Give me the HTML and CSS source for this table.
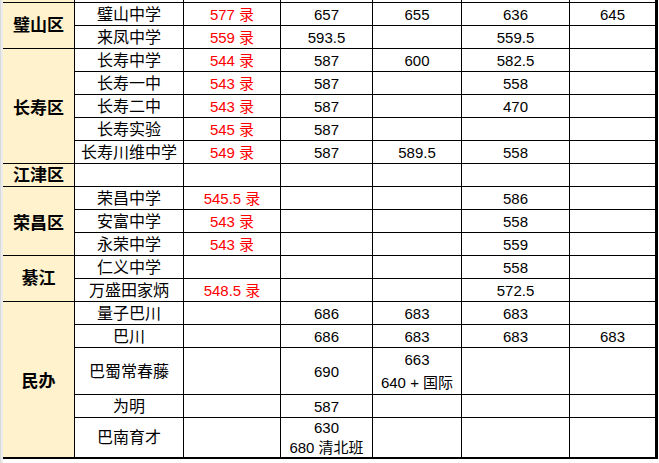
FILE: index.html
```html
<!DOCTYPE html>
<html lang="zh-CN">
<head>
<meta charset="utf-8">
<title>分数线</title>
<link rel="stylesheet" href="styles.css">
</head>
<body>
<div class="sheet">
  <div class="grid">
    <!-- partial top row -->
    <div class="c region"></div><div class="c"></div><div class="c"></div><div class="c"></div><div class="c"></div><div class="c"></div><div class="c"></div>

    <div class="c region span2">璧山区</div>
    <div class="c name">璧山中学</div><div class="c red">577 录</div><div class="c">657</div><div class="c">655</div><div class="c">636</div><div class="c">645</div>
    <div class="c name">来凤中学</div><div class="c red">559 录</div><div class="c">593.5</div><div class="c"></div><div class="c">559.5</div><div class="c"></div>

    <div class="c region span5 low">长寿区</div>
    <div class="c name">长寿中学</div><div class="c red">544 录</div><div class="c">587</div><div class="c">600</div><div class="c">582.5</div><div class="c"></div>
    <div class="c name">长寿一中</div><div class="c red">543 录</div><div class="c">587</div><div class="c"></div><div class="c">558</div><div class="c"></div>
    <div class="c name">长寿二中</div><div class="c red">543 录</div><div class="c">587</div><div class="c"></div><div class="c">470</div><div class="c"></div>
    <div class="c name">长寿实验</div><div class="c red">545 录</div><div class="c">587</div><div class="c"></div><div class="c"></div><div class="c"></div>
    <div class="c name">长寿川维中学</div><div class="c red">549 录</div><div class="c">587</div><div class="c">589.5</div><div class="c">558</div><div class="c"></div>

    <div class="c region">江津区</div>
    <div class="c"></div><div class="c"></div><div class="c"></div><div class="c"></div><div class="c"></div><div class="c"></div>

    <div class="c region span3 low">荣昌区</div>
    <div class="c name">荣昌中学</div><div class="c red">545.5 录</div><div class="c"></div><div class="c"></div><div class="c">586</div><div class="c"></div>
    <div class="c name">安富中学</div><div class="c red">543 录</div><div class="c"></div><div class="c"></div><div class="c">558</div><div class="c"></div>
    <div class="c name">永荣中学</div><div class="c red">543 录</div><div class="c"></div><div class="c"></div><div class="c">559</div><div class="c"></div>

    <div class="c region span2">綦江</div>
    <div class="c name">仁义中学</div><div class="c red"></div><div class="c"></div><div class="c"></div><div class="c">558</div><div class="c"></div>
    <div class="c name">万盛田家炳</div><div class="c red">548.5 录</div><div class="c"></div><div class="c"></div><div class="c">572.5</div><div class="c"></div>

    <div class="c region span5 low">民办</div>
    <div class="c name">量子巴川</div><div class="c"></div><div class="c">686</div><div class="c">683</div><div class="c">683</div><div class="c"></div>
    <div class="c name">巴川</div><div class="c"></div><div class="c">686</div><div class="c">683</div><div class="c">683</div><div class="c">683</div>
    <div class="c name">巴蜀常春藤</div><div class="c"></div><div class="c">690</div><div class="c multi"><span>663</span><span>640 + 国际</span></div><div class="c"></div><div class="c"></div>
    <div class="c name">为明</div><div class="c"></div><div class="c">587</div><div class="c"></div><div class="c"></div><div class="c"></div>
    <div class="c name">巴南育才</div><div class="c"></div><div class="c multi top"><span>630</span><span>680 清北班</span></div><div class="c"></div><div class="c"></div><div class="c"></div>
  </div>
</div>
</body>
</html>
```
FILE: styles.css
```css
html, body {
  margin: 0;
  padding: 0;
  background: #ffffff;
}

body {
  width: 659px;
  height: 463px;
  overflow: hidden;
  font-family: "Liberation Sans", "Noto Sans CJK SC", sans-serif;
  color: #000000;
}

.sheet {
  padding-left: 3px;
  background: linear-gradient(to right, #d9d9d9 0, #d9d9d9 1px, #ececec 1px, #ececec 3px, transparent 3px) no-repeat;
  height: 463px;
  box-sizing: border-box;
}

.grid {
  display: grid;
  width: 653px;
  grid-template-columns: 71px 108px 96px 91px 88px 107px 85px;
  grid-template-rows: 2px repeat(15, 22px) 46px 22px 39px;
  gap: 1px;
  background: #000000;
  border-right: 2px solid #000000;
  border-bottom: 2px solid #000000;
}

.c {
  background: #ffffff;
  display: flex;
  align-items: center;
  justify-content: center;
  text-align: center;
  font-size: 15px;
  line-height: 23px;
  white-space: nowrap;
  overflow: hidden;
}

.region {
  background: #fff2cc;
  font-weight: bold;
  font-size: 17px;
}

.low {
  padding-top: 4px;
  box-sizing: border-box;
}

.span2 { grid-row: span 2; }
.span3 { grid-row: span 3; }
.span5 { grid-row: span 5; }

.name {
  font-size: 16px;
}

.red {
  color: #ff0000;
}

.multi {
  flex-direction: column;
}

.multi span {
  display: block;
}

.multi.top {
  justify-content: flex-start;
  line-height: 22px;
}

.multi.top span:first-child {
  margin-top: -1px;
}

.multi.top span:last-child {
  line-height: 18px;
}
```
